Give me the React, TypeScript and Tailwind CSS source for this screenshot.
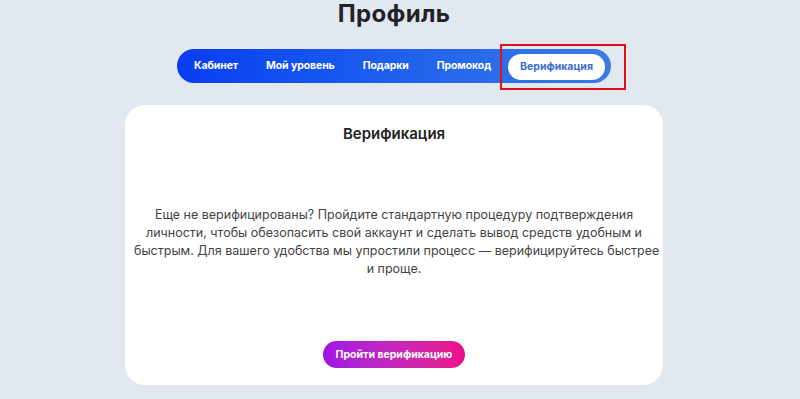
import React from "react";

const tabs = ["Кабинет", "Мой уровень", "Подарки", "Промокод"];

const App: React.FC = () => {
  return (
    <div
      className="w-[800px] h-[399px] overflow-hidden bg-[#e1e8ef]"
      style={{ fontFamily: "Inter, 'Open Sans', sans-serif" }}
    >
      <div className="w-[788px] flex flex-col items-center">
        {/* Title */}
        <h1 className="mt-0 text-[24px] leading-[28px] font-bold text-[#1f2328] tracking-[0.3px]">
          Профиль
        </h1>

        {/* Tabs */}
        <nav className="mt-[21px] flex items-center h-[34px] pl-[3px] pr-[6px] rounded-full bg-gradient-to-r from-[#0a3cf2] to-[#3b7ae6]">
          {tabs.map((t) => (
            <button
              key={t}
              className="px-[14px] h-[26px] text-[10.5px] font-bold text-white tracking-[-0.1px]"
            >
              {t}
            </button>
          ))}
          <div className="relative ml-[3px]">
            <button className="px-[12px] h-[26px] rounded-full bg-white text-[10.5px] font-bold text-[#3a6dd2]">
              Верификация
            </button>
            <div className="absolute left-[-8px] right-[-21px] top-[-8px] bottom-[-10px] border-2 border-[#e0101a]" />
          </div>
        </nav>

        {/* Card */}
        <section className="mt-[22px] w-[538px] h-[280px] bg-white rounded-[20px] flex flex-col items-center pt-[19px]">
          <h2 className="text-[15px] leading-[20px] font-semibold text-[#222]">Верификация</h2>
          <p className="mt-[62px] w-[520px] whitespace-nowrap text-center text-[12.5px] leading-[18px] text-[#444]">
            Еще не верифицированы? Пройдите стандартную процедуру подтверждения
            <br />
            личности, чтобы обезопасить свой аккаунт и сделать вывод средств удобным и
            <br />
            быстрым. Для вашего удобства мы упростили процесс — верифицируйтесь быстрее
            <br />
            и проще.
          </p>
          <button className="mt-auto mb-[17px] h-[27px] px-[13px] rounded-full bg-gradient-to-r from-[#a010e6] to-[#ee0a88] text-white text-[10.5px] font-bold">
            Пройти верификацию
          </button>
        </section>
      </div>
    </div>
  );
};

export default App;
